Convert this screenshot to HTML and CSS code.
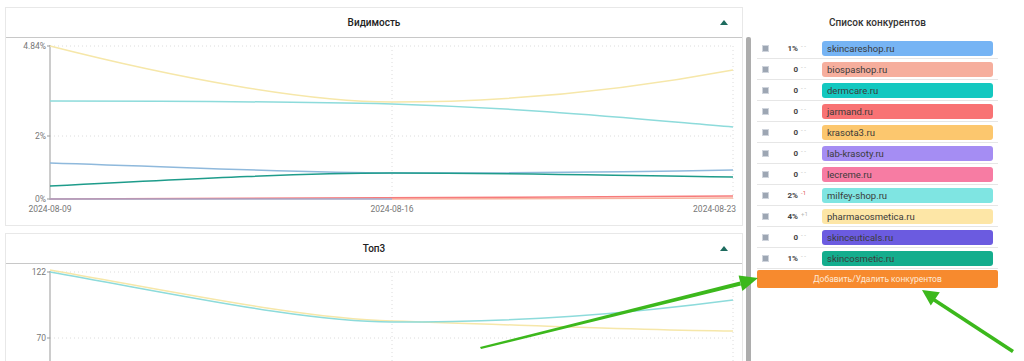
FILE: index.html
```html
<!DOCTYPE html>
<html lang="ru">
<head>
    <meta charset="UTF-8">
    <title>Конкуренты</title>
    <link rel="stylesheet" href="styles.css">
</head>
<body>
    <div class="page">
        <div class="charts-col">
            <div class="cards">
                <div class="card card-visibility">
                    <div class="card-header">
                        <span class="card-title">Видимость</span>
                        <span class="toggle"></span>
                    </div>
                    <svg class="chart" width="736" height="187" viewBox="0 0 736 187">
                        <g class="grid">
                            <line x1="44" y1="8" x2="727" y2="8"/>
                            <line x1="44" y1="98" x2="727" y2="98"/>
                            <line x1="386" y1="8" x2="386" y2="161"/>
                            <line x1="727" y1="8" x2="727" y2="161"/>
                        </g>
                        <line class="axis" x1="44" y1="7" x2="44" y2="162"/>
                        <line class="axis" x1="41" y1="8" x2="44" y2="8"/>
                        <line class="axis" x1="41" y1="98" x2="44" y2="98"/>
                        <line class="axis" x1="41" y1="161" x2="44" y2="161"/>
                        <text class="ylabel" x="40" y="11">4.84%</text>
                        <text class="ylabel" x="40" y="101">2%</text>
                        <text class="ylabel" x="40" y="164">0%</text>
                        <text class="xlabel" x="44" y="174">2024-08-09</text>
                        <text class="xlabel" x="386" y="174">2024-08-16</text>
                        <text class="xlabel end" x="730" y="174">2024-08-23</text>
                        <path class="line" stroke="#f6e7a9" d="M44,8 C170,40 300,64 386,64 C500,64 620,52 727,32"/>
                        <path class="line" stroke="#8ddbdb" d="M44,63 C200,63 300,64 386,66 C520,70 620,80 727,89"/>
                        <path class="line" stroke="#8fb9dc" d="M44,125 C200,130 300,135 386,135 C520,135 620,134 727,132"/>
                        <path class="line" stroke="#1e9c8b" d="M44,148 C200,140 300,135 386,135 C520,135 620,138 727,139"/>
                        <path class="line" stroke="#f6b39f" d="M44,161 L386,161 L727,160"/>
                        <path class="line" stroke="#f77b7b" d="M44,161 C300,161 500,159 727,158"/>
                        <path class="line thin" stroke="#7ab4ef" d="M44,161 L386,161"/>
                    </svg>
                </div>
                <div class="card card-top3">
                    <div class="card-header">
                        <span class="card-title">Топ3</span>
                        <span class="toggle"></span>
                    </div>
                    <svg class="chart" width="736" height="110" viewBox="0 0 736 110">
                        <g class="grid">
                            <line x1="44" y1="8" x2="727" y2="8"/>
                            <line x1="44" y1="74" x2="727" y2="74"/>
                            <line x1="386" y1="8" x2="386" y2="110"/>
                            <line x1="727" y1="8" x2="727" y2="110"/>
                        </g>
                        <line class="axis" x1="44" y1="7" x2="44" y2="110"/>
                        <line class="axis" x1="41" y1="8" x2="44" y2="8"/>
                        <line class="axis" x1="41" y1="74" x2="44" y2="74"/>
                        <text class="ylabel" x="40" y="11">122</text>
                        <text class="ylabel" x="40" y="77">70</text>
                        <path class="line" stroke="#f6e7a9" d="M44,6 C180,30 300,55 386,57 C520,61 620,66 727,67"/>
                        <path class="line" stroke="#8ddbdb" d="M44,8 C180,32 300,58 386,58 C520,58 620,50 727,36"/>
                    </svg>
                </div>
            </div>
            <div class="scrollbar"></div>
        </div>

        <div class="competitors">
            <div class="competitors-title">Список конкурентов</div>
            <div class="comp-row">
                <span class="check"></span><span class="pct">1%</span><span class="delta">- -</span>
                <span class="pill" style="background:#76b4f4">skincareshop.ru</span>
            </div>
            <div class="comp-row">
                <span class="check"></span><span class="pct">0</span><span class="delta">- -</span>
                <span class="pill" style="background:#f6ae9d">biospashop.ru</span>
            </div>
            <div class="comp-row">
                <span class="check"></span><span class="pct">0</span><span class="delta">- -</span>
                <span class="pill" style="background:#14c8c0">dermcare.ru</span>
            </div>
            <div class="comp-row">
                <span class="check"></span><span class="pct">0</span><span class="delta">- -</span>
                <span class="pill" style="background:#f87374">jarmand.ru</span>
            </div>
            <div class="comp-row">
                <span class="check"></span><span class="pct">0</span><span class="delta">- -</span>
                <span class="pill" style="background:#fcc76e">krasota3.ru</span>
            </div>
            <div class="comp-row">
                <span class="check"></span><span class="pct">0</span><span class="delta">- -</span>
                <span class="pill" style="background:#a58df3">lab-krasoty.ru</span>
            </div>
            <div class="comp-row">
                <span class="check"></span><span class="pct">0</span><span class="delta">- -</span>
                <span class="pill" style="background:#f77ca3">lecreme.ru</span>
            </div>
            <div class="comp-row">
                <span class="check"></span><span class="pct">2%</span><span class="delta down">-1</span>
                <span class="pill" style="background:#7fe5e2">milfey-shop.ru</span>
            </div>
            <div class="comp-row">
                <span class="check"></span><span class="pct">4%</span><span class="delta">+1</span>
                <span class="pill" style="background:#fde6a6">pharmacosmetica.ru</span>
            </div>
            <div class="comp-row">
                <span class="check"></span><span class="pct">0</span><span class="delta">- -</span>
                <span class="pill" style="background:#6b5be0">skinceuticals.ru</span>
            </div>
            <div class="comp-row">
                <span class="check"></span><span class="pct">1%</span><span class="delta">- -</span>
                <span class="pill" style="background:#14ad8d">skincosmetic.ru</span>
            </div>
            <button class="edit-btn">Добавить/Удалить конкурентов</button>
        </div>
    </div>

    <!-- annotation arrows drawn over the screenshot -->
    <svg class="arrows" width="1024" height="361" viewBox="0 0 1024 361">
        <polygon points="480,347 740,281.5 741,285.5 481,349" />
        <polygon points="758,278 738.6,275.4 742.4,291" />
        <polygon points="1014,350 933,297 931,300 1012,353" />
        <polygon points="922,290 939.8,292.3 930.8,305.5" />
    </svg>
</body>
</html>
```

FILE: styles.css
```css
html, body {
    margin: 0;
    height: 361px;
    overflow: hidden;
    background: #fff;
}
body {
    font-family: Roboto, 'Liberation Sans', sans-serif;
    color: #333;
    position: relative;
}
.page {
    display: flex;
    padding: 7px 0 0 5px;
}
.charts-col {
    display: flex;
    width: 746px;
}
.cards {
    display: flex;
    flex-direction: column;
    gap: 7px;
    width: 738px;
}
.card {
    border: 1px solid #e8e8e8;
    background: #fff;
}
.card-visibility {
    height: 217px;
}
.card-top3 {
    height: 140px;
}
.card-header {
    position: relative;
    height: 29px;
    border-bottom: 1px solid #c8c8c8;
    display: flex;
    align-items: center;
    justify-content: center;
}
.card-title {
    font-size: 10px;
    font-weight: 500;
    color: #222;
}
.toggle {
    position: absolute;
    right: 14px;
    top: 12px;
    width: 0;
    height: 0;
    border-left: 4px solid transparent;
    border-right: 4px solid transparent;
    border-bottom: 5px solid #1d6b5e;
}
.chart {
    display: block;
}
.grid line {
    stroke: #dcdcdc;
    stroke-width: 1;
    stroke-dasharray: 1 3;
}
.axis {
    stroke: #999;
    stroke-width: 1;
}
.ylabel {
    font-size: 8.5px;
    fill: #777;
    text-anchor: end;
}
.xlabel {
    font-size: 8.5px;
    fill: #777;
    text-anchor: middle;
}
.xlabel.end {
    text-anchor: end;
}
.line {
    fill: none;
    stroke-width: 1.5;
}
.line.thin {
    stroke-width: 1;
}
.scrollbar {
    margin: 30px 0 0 3px;
    width: 5px;
    background: #adadad;
    border-radius: 2px 2px 0 0;
}
.competitors {
    margin-left: 6px;
    width: 241px;
}
.competitors-title {
    height: 31px;
    line-height: 31px;
    text-align: center;
    font-size: 10px;
    font-weight: 500;
    color: #333;
}
.comp-row {
    display: grid;
    grid-template-columns: 12px 25px 24px 1fr;
    align-items: center;
    height: 20px;
    border-bottom: 1px solid #e6e6e6;
    padding: 0 5px 0 4px;
}
.check {
    width: 5px;
    height: 5px;
    background: #9da6b3;
    border: 1px solid #cfd4dc;
    margin-left: 1px;
}
.pct {
    font-size: 8px;
    font-weight: 700;
    color: #444;
    text-align: right;
}
.delta {
    font-size: 6px;
    color: #b5b5b5;
    align-self: start;
    margin-top: 4px;
    padding-left: 3px;
}
.delta.down {
    color: #e06060;
}
.pill {
    height: 15px;
    line-height: 15px;
    border-radius: 3px;
    padding-left: 5px;
    font-size: 9.5px;
    color: #3b3b3b;
}
.edit-btn {
    display: block;
    width: 241px;
    height: 18px;
    margin-top: 1px;
    border: none;
    border-radius: 2px;
    background: #f78a2e;
    color: #fde9d8;
    font-family: Roboto, 'Liberation Sans', sans-serif;
    font-size: 8.5px;
    padding: 0;
}
.arrows {
    position: absolute;
    top: 0;
    left: 0;
    pointer-events: none;
}
.arrows polygon {
    fill: #3cb81c;
}
```
